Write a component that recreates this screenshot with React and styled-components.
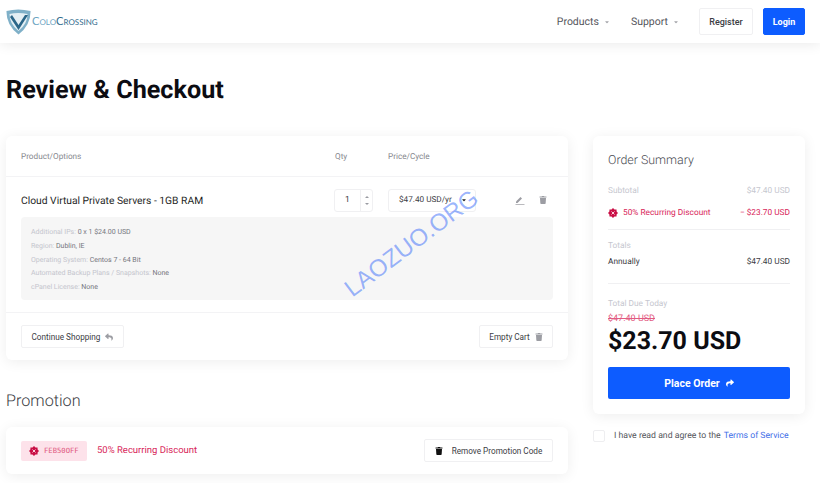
import React from "react";
import styled, { createGlobalStyle } from "styled-components";
import { FaReply, FaShare, FaTrash, FaCaretDown } from "react-icons/fa";

const GlobalStyle = createGlobalStyle`
  html, body { margin: 0; padding: 0; background: #fff; }
  body { font-family: Roboto, "Liberation Sans", sans-serif; width: 820px; height: 483px; overflow: hidden; position: relative; text-rendering: geometricPrecision; }
  * { box-sizing: border-box; }
`;

const Header = styled.header`
  height: 43px;
  background: #fff;
  box-shadow: 0 1px 14px rgba(0, 0, 0, 0.09);
  display: flex;
  align-items: center;
  justify-content: space-between;
  padding: 0 15px 0 6px;
  position: relative;
`;
const Logo = styled.div`
  display: flex;
  align-items: center;
  gap: 1px;
`;
const LogoText = styled.span`
  font-family: "Lato", sans-serif;
  font-variant: small-caps;
  font-size: 11.1px;
  color: #2f6a8c;
  span { color: #6ba3bf; }
`;
const Nav = styled.nav`
  display: flex;
  align-items: center;
`;
const NavLink = styled.a`
  font-size: 10.5px;
  color: #55565c;
  display: flex;
  align-items: center;
  gap: 5px;
  margin-right: ${(p) => p.$gap}px;
  svg { width: 6px; height: 6px; color: #a6a7ac; }
`;
const NavButton = styled.button`
  height: 27px;
  font: ${(p) => (p.$primary ? 700 : 500)} 9px Roboto, sans-serif;
  border-radius: 2px;
  border: 1px solid ${(p) => (p.$primary ? "#0d5cff" : "#f0f0f2")};
  background: ${(p) => (p.$primary ? "#0d5cff" : "#fff")};
  color: ${(p) => (p.$primary ? "#fff" : "#3c3d44")};
  width: ${(p) => p.$w}px;
  margin-left: ${(p) => p.$ml}px;
  padding: 0;
`;

const Title = styled.h1`
  margin: 35px 0 32px 6px;
  font-size: 25.2px;
  line-height: 26px;
  font-weight: 700;
  color: #0c0c12;
`;
const Columns = styled.div`
  display: grid;
  grid-template-columns: 562px 212px;
  column-gap: 25px;
  padding-left: 6px;
  align-items: start;
`;
const Card = styled.section`
  background: #fff;
  border-radius: 6px;
  box-shadow: 0 2px 14px rgba(0, 0, 0, 0.07);
`;
const Grid = styled.div`
  display: grid;
  grid-template-columns: 314px 53px 1fr;
  padding: 0 15px;
  align-items: center;
`;
const CartHead = styled(Grid)`
  height: 41px;
  padding-top: 1px;
  border-bottom: 1px solid #f3f3f5;
  font-size: 8.2px;
  color: #86878e;
`;
const CartRow = styled(Grid)`
  height: 34px;
  margin-top: 6px;
`;
const ProductName = styled.div`
  font-size: 10.3px;
  font-weight: 400;
  color: #1e1f26;
`;
const QtyBox = styled.div`
  width: 39px;
  height: 23px;
  margin-left: -1px;
  border: 1px solid #f0f0f2;
  border-radius: 3px;
  display: grid;
  grid-template-columns: 26px 1fr;
  font-size: 8.5px;
  color: #3c3d44;
`;
const QtyValue = styled.div`
  display: flex;
  align-items: center;
  justify-content: center;
  border-right: 1px solid #f0f0f2;
`;
const QtyArrows = styled.div`
  display: flex;
  flex-direction: column;
  justify-content: center;
  align-items: center;
  gap: 5px;
`;
const Arrow = styled.i`
  width: 0;
  height: 0;
  border-left: 2px solid transparent;
  border-right: 2px solid transparent;
  ${(p) => (p.$up ? "border-bottom" : "border-top")}: 2px solid #9a9ba2;
`;
const PriceCell = styled.div`
  display: flex;
  align-items: center;
`;
const CycleSelect = styled.div`
  width: 88px;
  height: 23px;
  border: 1px solid #f0f0f2;
  border-radius: 3px;
  font-size: 8.2px;
  color: #3c3d44;
  display: flex;
  align-items: center;
  padding-left: 10px;
  gap: 9px;
  white-space: nowrap;
  svg { width: 6px; height: 6px; color: #222; }
`;
const RowIcons = styled.div`
  margin-left: 39px;
  display: flex;
  gap: 14px;
  align-items: center;
  color: #9c9da3;
  svg { display: block; }
`;
const Details = styled.div`
  margin: 0 15px;
  height: 83px;
  background: #f6f6f6;
  border-radius: 4px;
  padding: 9px 10px;
  font-size: 7px;
  line-height: 13.8px;
  color: #c4c5cd;
`;
const DetailValue = styled.span`
  color: #74757d;
`;
const CartFoot = styled.div`
  margin-top: 12px;
  height: 48px;
  border-top: 1px solid #f3f3f5;
  padding: 0 15px;
  display: flex;
  align-items: center;
  justify-content: space-between;
`;
const GhostButton = styled.button`
  height: 23px;
  width: ${(p) => p.$w}px;
  background: #fff;
  border: 1px solid #f0f0f2;
  border-radius: 2px;
  font: 400 8.2px Roboto, sans-serif;
  color: #3c3d44;
  display: flex;
  align-items: center;
  justify-content: center;
  gap: ${(p) => p.$gap || 5}px;
  padding: 0;
  svg { width: 8px; height: 8px; color: ${(p) => p.$icon || "#9c9da3"}; }
`;
const SectionTitle = styled.h2`
  margin: 31px 0 16px;
  font-size: 16.2px;
  line-height: 20px;
  font-weight: 300;
  color: #3a3b42;
`;
const PromoCard = styled(Card)`
  height: 47px;
  padding: 0 15px;
  display: flex;
  align-items: center;
`;
const PromoTag = styled.div`
  width: 66px;
  height: 20px;
  background: #fde2ea;
  border-radius: 2px;
  display: flex;
  align-items: center;
  gap: 5px;
  padding-left: 8px;
  font-family: "DejaVu Sans Mono", monospace;
  font-size: 7.2px;
  color: #e0587f;
`;
const PromoText = styled.span`
  margin-left: 10px;
  font-size: 9.5px;
  color: #d8265a;
`;
const Spacer = styled.div`
  flex: 1;
`;

const Summary = styled(Card)`
  padding: 16px 15px 15px;
  height: 278px;
`;
const SummaryTitle = styled.h3`
  margin: 0 0 16px;
  font-size: 12.4px;
  line-height: 17px;
  font-weight: 300;
  color: #4a4b52;
`;
const Line = styled.div`
  display: flex;
  justify-content: space-between;
  align-items: center;
  font-size: 8.3px;
  line-height: 12px;
  color: ${(p) => p.$color || "#c6c7cf"};
  margin-bottom: ${(p) => p.$mb || 0}px;
`;
const LineLabel = styled.span`
  display: flex;
  align-items: center;
  gap: 5px;
`;
const Divider = styled.hr`
  border: 0;
  border-top: 1px solid #f0f0f2;
  margin: ${(p) => p.$t}px 0 ${(p) => p.$b}px;
`;
const Struck = styled.div`
  font-size: 9px;
  line-height: 12px;
  margin-top: 3px;
  color: #e25b82;
  text-decoration: line-through;
`;
const Total = styled.div`
  font-size: 25px;
  line-height: 30px;
  font-weight: 700;
  color: #0c0c12;
  margin-top: 2px;
`;
const PlaceOrder = styled.button`
  width: 100%;
  height: 32px;
  margin-top: 10px;
  background: #0d5cff;
  border: 0;
  border-radius: 2px;
  color: #fff;
  font: 700 10.5px Roboto, sans-serif;
  display: flex;
  align-items: center;
  justify-content: center;
  gap: 6px;
  svg { width: 8px; height: 8px; }
`;
const Terms = styled.label`
  display: flex;
  align-items: center;
  margin-top: 16px;
  font-size: 8.7px;
  color: #55565c;
  white-space: nowrap;
`;
const Check = styled.span`
  width: 12px;
  height: 12px;
  border: 1px solid #eeeef0;
  border-radius: 2px;
  margin-right: 9px;
`;
const TermsLink = styled.a`
  color: #3f6fe8;
  margin-left: 3px;
`;
const Watermark = styled.div`
  position: absolute;
  left: 412px;
  top: 244px;
  transform: translate(-50%, -50%) rotate(-37deg);
  font-family: "Liberation Sans", sans-serif;
  font-size: 24px;
  color: rgba(30, 90, 250, 0.45);
  white-space: nowrap;
  pointer-events: none;
`;

const Shield = () => (
  <svg width="25" height="26" viewBox="0 0 25 26">
    <path d="M0.5 2 Q12 -1 24.5 2 Q25 16 12.5 25.5 Q0 16 0.5 2Z" fill="#7fb0c8" />
    <path d="M3.5 5 Q12 3 21.5 5 Q21.5 15 12.5 22 Q3.5 15 3.5 5Z" fill="#e4eff4" />
    <path d="M6 6 L12.5 16 L19 6 L22 6 L12.5 21 L4 8Z" fill="#2b6688" />
  </svg>
);
const Edit = () => (
  <svg width="10" height="10" viewBox="0 0 10 10" fill="currentColor">
    <path d="M1 6.5 L5.5 2 L7 3.5 L2.5 8 H1Z" />
    <path d="M0.5 9 H9.5 V9.7 H0.5Z" />
  </svg>
);
const Badge = ({ size = 10 }) => {
  const pts = [];
  for (let i = 0; i < 16; i++) {
    const r = i % 2 ? 3.9 : 5;
    const a = (i * Math.PI) / 8;
    pts.push(`${5 + r * Math.cos(a)},${5 + r * Math.sin(a)}`);
  }
  return (
    <svg width={size} height={size} viewBox="0 0 10 10">
      <polygon points={pts.join(" ")} fill="#c90f45" />
      <path d="M3.5 3.5 L6.5 6.5 M6.5 3.5 L3.5 6.5" stroke="#fde2ea" strokeWidth="0.9" />
    </svg>
  );
};

export default function App() {
  return (
    <>
      <GlobalStyle />
      <Header>
        <Logo>
          <Shield />
          <LogoText>
            <span>Colo</span>Crossing
          </LogoText>
        </Logo>
        <Nav>
          <NavLink $gap={21}>Products <FaCaretDown /></NavLink>
          <NavLink $gap={0}>Support <FaCaretDown /></NavLink>
          <NavButton $w={54} $ml={20}>Register</NavButton>
          <NavButton $primary $w={42} $ml={10}>Login</NavButton>
        </Nav>
      </Header>
      <Title>Review &amp; Checkout</Title>
      <Columns>
        <div>
          <Card>
            <CartHead>
              <span>Product/Options</span>
              <span>Qty</span>
              <span>Price/Cycle</span>
            </CartHead>
            <CartRow>
              <ProductName>Cloud Virtual Private Servers - 1GB RAM</ProductName>
              <QtyBox>
                <QtyValue>1</QtyValue>
                <QtyArrows><Arrow $up /><Arrow /></QtyArrows>
              </QtyBox>
              <PriceCell>
                <CycleSelect>$47.40 USD/yr <FaCaretDown /></CycleSelect>
                <RowIcons>
                  <Edit />
                  <FaTrash size={8} />
                </RowIcons>
              </PriceCell>
            </CartRow>
            <Details>
              <div>Additional IPs: <DetailValue>0 x 1 $24.00 USD</DetailValue></div>
              <div>Region: <DetailValue>Dublin, IE</DetailValue></div>
              <div>Operating System: <DetailValue>Centos 7 - 64 Bit</DetailValue></div>
              <div>Automated Backup Plans / Snapshots: <DetailValue>None</DetailValue></div>
              <div>cPanel License: <DetailValue>None</DetailValue></div>
            </Details>
            <CartFoot>
              <GhostButton $w={103}>Continue Shopping <FaReply /></GhostButton>
              <GhostButton $w={74}>Empty Cart <FaTrash /></GhostButton>
            </CartFoot>
          </Card>
          <SectionTitle>Promotion</SectionTitle>
          <PromoCard>
            <PromoTag><Badge />FEB50OFF</PromoTag>
            <PromoText>50% Recurring Discount</PromoText>
            <Spacer />
            <GhostButton $w={129} $gap={9} $icon="#111"><FaTrash />Remove Promotion Code</GhostButton>
          </PromoCard>
        </div>
        <div>
          <Summary>
            <SummaryTitle>Order Summary</SummaryTitle>
            <Line $mb={10}><span>Subtotal</span><span>$47.40 USD</span></Line>
            <Line $color="#d8265a">
              <LineLabel><Badge />50% Recurring Discount</LineLabel>
              <span>− $23.70 USD</span>
            </Line>
            <Divider $t={10} $b={10} />
            <Line $mb={4}><span>Totals</span></Line>
            <Line $color="#3c3d44"><span>Annually</span><span>$47.40 USD</span></Line>
            <Divider $t={15} $b={14} />
            <Line><span>Total Due Today</span></Line>
            <Struck>$47.40 USD</Struck>
            <Total>$23.70 USD</Total>
            <PlaceOrder>Place Order <FaShare /></PlaceOrder>
          </Summary>
          <Terms>
            <Check />I have read and agree to the <TermsLink>Terms of Service</TermsLink>
          </Terms>
        </div>
      </Columns>
      <Watermark>LAOZUO.ORG</Watermark>
    </>
  );
}
